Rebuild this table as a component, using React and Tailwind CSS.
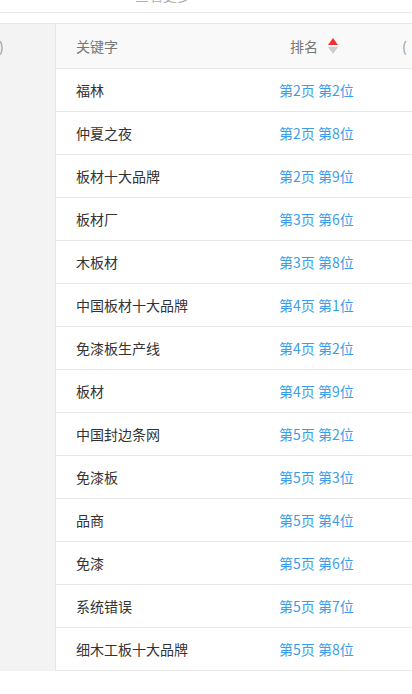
import React from "react";

const rows = [
  ["福林", "第2页 第2位"],
  ["仲夏之夜", "第2页 第8位"],
  ["板材十大品牌", "第2页 第9位"],
  ["板材厂", "第3页 第6位"],
  ["木板材", "第3页 第8位"],
  ["中国板材十大品牌", "第4页 第1位"],
  ["免漆板生产线", "第4页 第2位"],
  ["板材", "第4页 第9位"],
  ["中国封边条网", "第5页 第2位"],
  ["免漆板", "第5页 第3位"],
  ["品商", "第5页 第4位"],
  ["免漆", "第5页 第6位"],
  ["系统错误", "第5页 第7位"],
  ["细木工板十大品牌", "第5页 第8位"],
];

function SortArrows() {
  return (
    <span className="ml-[10px] flex flex-col gap-[2px]">
      <svg width="10" height="7" viewBox="0 0 10 7">
        <path d="M5 0L10 7H0z" fill="#f23030" />
      </svg>
      <svg width="10" height="7" viewBox="0 0 10 7">
        <path d="M0 0H10L5 7z" fill="#cccccc" />
      </svg>
    </span>
  );
}

export default function App() {
  return (
    <div
      className="w-[412px] h-[694px] overflow-hidden bg-white text-[14px]"
      style={{ fontFamily: '"Noto Sans CJK SC", "Noto Sans", sans-serif' }}
    >
      <div className="h-[13px] overflow-hidden border-b border-[#e6e6e6]">
        <div className="-mt-[14px] pl-[135px] text-[14px] leading-[18px] text-[#b0b0b0]">查看更多</div>
      </div>
      <div className="h-[11px] border-b border-[#e6e6e6]" />
      <div className="flex">
        <div className="w-[56px] shrink-0 bg-[#f3f3f3] border-r border-[#e6e6e6] h-[647px]">
          <div className="h-[44px] flex items-center text-[#999] -ml-[1px]">)</div>
        </div>
        <div className="flex-1">
          <div className="h-[45px] flex items-center bg-[#f9f9f9] border-b border-[#e6e6e6] text-[#777]">
            <div className="w-[223px] pl-[20px]">关键字</div>
            <div className="w-[123px] pl-[11px] flex items-center">
              排名
              <SortArrows />
            </div>
            <div className="text-[#999]">(</div>
          </div>
          {rows.map(([k, r]) => (
            <div key={k} className="h-[43px] flex items-center border-b border-[#e6e6e6]">
              <div className="w-[223px] pl-[20px] text-[#333]">{k}</div>
              <div className="text-[#3a9ee8]">{r}</div>
            </div>
          ))}
        </div>
      </div>
    </div>
  );
}
